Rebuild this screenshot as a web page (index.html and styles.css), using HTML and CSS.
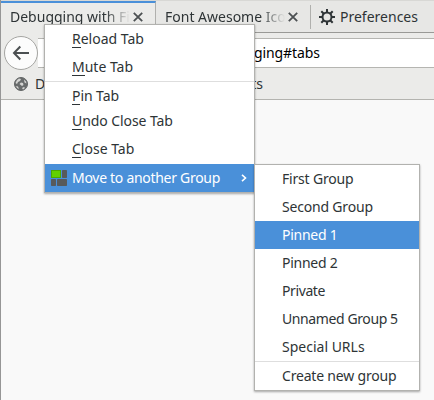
FILE: index.html
```html
<!DOCTYPE html>
<html lang="en">
<head>
<meta charset="utf-8">
<title>Debugging</title>
<link rel="stylesheet" href="styles.css">
</head>
<body>
<div class="window">
  <div class="tabs">
    <div class="tab active"><span class="label t1">Debugging with Fir</span>
      <svg class="close" viewBox="0 0 10 10"><path d="M.8.8l8.4 8.4M9.2.8L.8 9.2"/></svg></div>
    <div class="tab second"><span class="label t2">Font Awesome Ico</span>
      <svg class="close" viewBox="0 0 10 10"><path d="M.8.8l8.4 8.4M9.2.8L.8 9.2"/></svg></div>
    <div class="tab prefs">
      <svg class="gear" viewBox="0 0 16 16"><circle cx="8" cy="8" r="4.5"/><path d="M8 0v3.5M8 12.5V16M0 8h3.5M12.5 8H16M2.3 2.3l2.5 2.5M11.2 11.2l2.5 2.5M2.3 13.7l2.5-2.5M11.2 4.8l2.5-2.5"/></svg>
      <span class="t3">Preferences</span></div>
  </div>
  <div class="toolbar">
    <div class="back"><svg viewBox="0 0 18 16"><path d="M8.3 1.5L2 8l6.3 6.5M2 8h15"/></svg></div>
    <div class="url"><span>ging#tabs</span></div>
  </div>
  <div class="bookmarks">
    <svg class="globe" viewBox="0 0 14 14"><circle class="sea" cx="7" cy="7" r="6.5"/><path class="light" d="M1.5 6L3 3l2-1.5 2 .5-1 2-2 1-1 2zM5.5 7L7 5.5l2 .5.5 2-1.5 1zM2 9l2 .5L5 12l-2-1zM8 11l2-1 1 1-2 1.5zM10 2.5l2 2 .5 2-2-1z"/></svg>
    <span>D</span><span class="events">ts</span>
  </div>
</div>
<div class="menu main">
  <div class="item"><span class="m1"><u>R</u>eload Tab</span></div>
  <div class="item"><span class="m2"><u>M</u>ute Tab</span></div>
  <hr>
  <div class="item pin"><span class="m3"><u>P</u>in Tab</span></div>
  <div class="item"><span class="m4"><u>U</u>ndo Close Tab</span></div>
  <div class="item last"><span class="m5"><u>C</u>lose Tab</span></div>
  <div class="item selected"><svg class="groups" viewBox="0 0 16 16"><rect x=".5" y=".5" width="9" height="7" fill="#62d000" stroke="#4ca800"/><g fill="#575a5b"><rect x="11" width="5" height="8" rx=".7"/><rect y="9" width="5" height="7" rx=".7"/><rect x="6" y="9" width="10" height="7" rx=".7"/></g></svg><span class="m6">Move to another Group</span>
    <svg class="chevron" viewBox="0 0 6 8"><path d="M1 .8L4.5 4 1 7.2"/></svg></div>
</div>
<div class="menu sub">
  <div class="item"><span class="s1">First Group</span></div>
  <div class="item"><span class="s2">Second Group</span></div>
  <div class="item selected"><span class="s3">Pinned 1</span></div>
  <div class="item"><span class="s4">Pinned 2</span></div>
  <div class="item"><span class="s5">Private</span></div>
  <div class="item"><span class="s6">Unnamed Group 5</span></div>
  <div class="item"><span class="s7">Special URLs</span></div>
  <hr>
  <div class="item"><span class="s8">Create new group</span></div>
</div>
</body>
</html>
```
FILE: styles.css
```css
* { box-sizing: border-box; }
body {
  margin: 0; width: 434px; height: 400px; overflow: hidden;
  background: #f9f9f9; border-left: 1px solid #969696;
  font: 14px/28px "Noto Sans", "Open Sans", sans-serif; color: #2e3436;
}
svg { display: block; flex: none; fill: none; stroke: #4c5052; }
.window { height: 100px; margin-left: -1px; border-left: 1px solid #b39a78; background: #ebebe9; border-bottom: 1px solid #b3b3af; }
.tabs { display: flex; height: 33px; border-top: 1px solid #d8d8d5; }
.tab {
  display: flex; align-items: center; padding: 0 12px 0 9px;
  border-bottom: 1px solid #999996; background: #e7e7e5; white-space: nowrap;
}
.active { width: 155px; border-top: 2px solid #4a90d9; border-right: 1px solid #b0b0ad; border-bottom: 0; background: #ebebe9; padding-bottom: 2px; }
.second { width: 154px; }
.prefs { flex: 1; padding-left: 9px; position: relative; }
.prefs::before { content: ""; position: absolute; left: 0; top: 4px; width: 1px; height: 24px; background: #b0b0ad; }
.label { width: 120px; -webkit-mask-image: linear-gradient(90deg, #000 79%, transparent); mask-image: linear-gradient(90deg, #000 79%, transparent); }
.close { width: 10px; height: 10px; margin-left: auto; stroke-width: 1.8; }
.gear { width: 16px; height: 16px; margin-right: 5px; stroke: #2e3436; stroke-width: 2; }
.toolbar { display: flex; height: 35px; padding-top: 5px; }
.back { width: 34px; height: 34px; flex: none; margin: -2px 0 0 3px; border: 1px solid #a5a5a2; border-radius: 50%; background: #fcfcfc; display: grid; place-items: center; }
.back svg { width: 18px; height: 16px; stroke-width: 2; }
.url { flex: 1; height: 30px; padding-left: 216px; border: solid #b5b5b1; border-width: 1px 0; background: #fff; color: #000; letter-spacing: -.1px; white-space: nowrap; }
.bookmarks { display: flex; align-items: center; height: 31px; padding-left: 13px; }
.globe { width: 14px; height: 14px; margin-right: 7px; }
.sea { fill: #696c6c; stroke: #626565; }
.light { fill: #d5d5d3; stroke: none; }
.events { margin-left: auto; margin-right: 171px; }
.menu { position: absolute; background: #fff; border: 1px solid #b2b2af; box-shadow: 0 1px 2px #0005; }
.main { left: 44px; top: 24px; width: 211px; height: 169px; }
.sub { left: 254px; top: 164px; width: 166px; height: 227px; }
.item { display: flex; align-items: center; height: 28px; padding-left: 27px; white-space: nowrap; }
.pin { height: 25px; padding-top: 3px; }
.last { height: 29px; padding-bottom: 1px; }
.selected { background: #4a90d9; color: #fff; }
.main .selected { padding-left: 6px; }
.groups { width: 16px; height: 16px; margin-right: 5px; stroke: none; }
.chevron { width: 6px; height: 8px; margin: 0 7px 0 auto; stroke: #fff; stroke-width: 1.6; }
hr { height: 1px; margin: 0; border: 0; background: #dedede; }
u { text-decoration: none; display: inline-block; height: 18px; line-height: 18px; border-bottom: 1px solid #2e3436; }
.main .item span { line-height: 18px; }
.m3, .m4 { letter-spacing: -.08px; }
.m6 { letter-spacing: -.29px; }
.s1, .s2, .s8 { letter-spacing: -.19px; }
.s3, .s4 { letter-spacing: -.27px; }
.s5, .s6 { letter-spacing: -.4px; }
```
